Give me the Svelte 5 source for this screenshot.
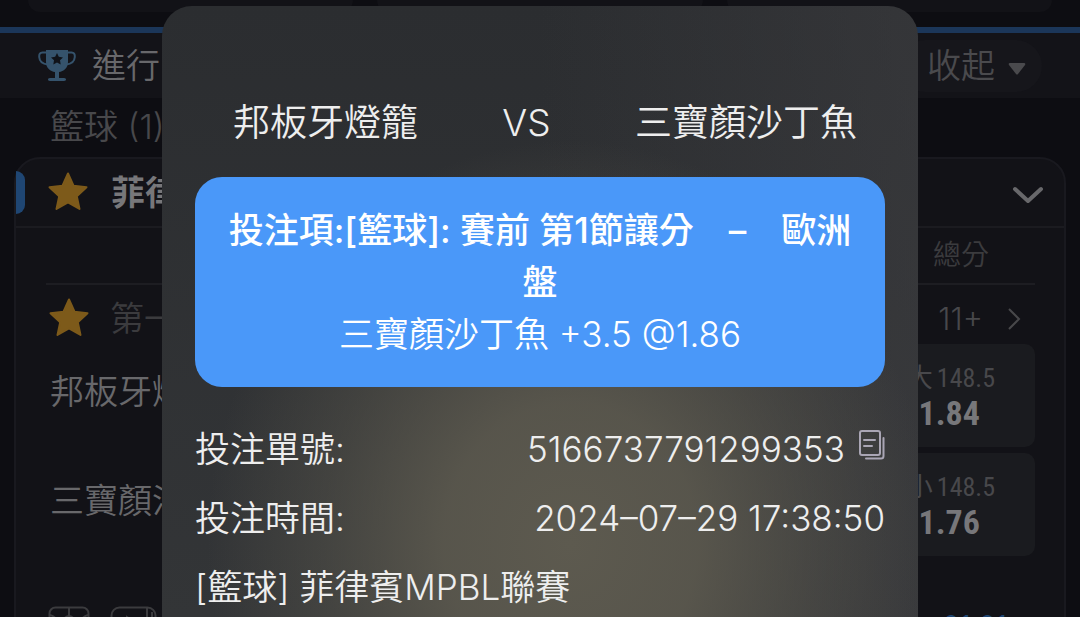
<script>
  const teams = ['邦板牙燈籠', '三寶顏沙丁魚'];
  const odds = [
    { team: teams[0], side: '大', line: '148.5', price: '1.84' },
    { team: teams[1], side: '小', line: '148.5', price: '1.76' },
  ];
  const orderNo = '5166737791299353';
  const orderTime = '2024–07–29 17:38:50';
  const copyOrder = () => navigator.clipboard?.writeText(orderNo);
</script>

{#snippet star()}
  <svg class="star" viewBox="0 0 42 40" aria-hidden="true">
    <path d="M21 2.5l5.5 12.2 13 1.5-9.7 9 2.7 12.8L21 31.500 9.500 38l2.700-12.800-9.700-9 13-1.500z" />
  </svg>
{/snippet}

<div class="screen">
  <main class="page" inert>
    <nav class="tabs"><span class="tab"></span><span class="tab"></span><span class="tab"></span></nav>

    <header class="live">
      <svg class="trophy" viewBox="0 0 38 34" aria-hidden="true">
        <path d="M9 3.500H4.500C2 3.500 1 5 1.200 8 1.500 12.500 4 15 10 15.500M29 3.500h4.500c2.500 0 3.500 1.500 3.300 4.500-.3 4.500-2.800 7-8.800 7.500" fill="none" stroke="#35536c" stroke-width="2" />
        <path d="M8 1h22v12c0 6-4.500 9.500-9 10v6H26c1.500 0 2 1 2 1.500s-.5 1.500-2 1.500H12c-1.500 0-2-1-2-1.500S10.500 29 12 29h5v-6C12.500 22.500 8 19 8 13z" fill="#35536c" />
        <path d="M19 4l1.800 3.800 4.200.6-3 2.900.7 4.200-3.700-2-3.700 2 .7-4.200-3-2.900 4.200-.6z" fill="#101319" />
      </svg>
      <h2>進行</h2>
      <button class="collapse" type="button">
        收起
        <svg viewBox="0 0 20 16" width="20" height="16" aria-hidden="true">
          <path d="M3 2h14q2 0 1 2l-7 9q-1 1-2 0L2 4Q1 2 3 2z" fill="#4a4a4d" />
        </svg>
      </button>
    </header>

    <h3>籃球 (1)</h3>

    <section class="card">
      <div class="league">
        <i class="accent"></i>
        {@render star()}
        <strong>菲律賓</strong>
        <svg class="chevron" viewBox="0 0 32 20" aria-hidden="true">
          <path d="M3 4l13 12L29 4" fill="none" stroke="#68686b" stroke-width="4" stroke-linecap="round" stroke-linejoin="round" />
        </svg>
      </div>
      <div class="body">
        <div class="columns">總分</div>
        <div class="period">
          {@render star()}
          <span>第一節</span>
          <a href="#more">11+
            <svg viewBox="0 0 14 24" width="14" height="24" aria-hidden="true">
              <path d="M2 2l10 10L2 22" fill="none" stroke="#48484b" stroke-width="2" />
            </svg>
          </a>
        </div>
        {#each odds as o}
          <div class="row">
            <span class="name">{o.team}</span>
            <button class="odd" type="button">
              <span class="line"><span class="side">{o.side}</span>{o.line}</span>
              <b>{o.price}</b>
            </button>
          </div>
        {/each}
        <footer>
          <svg viewBox="0 0 42 36" width="42" height="36" aria-hidden="true">
            <rect x="1.500" y="1.500" width="39" height="30" rx="6" />
            <path d="M21 2v28M2 9q8 2 8 12M40 9q-8 2-8 12" /><circle cx="21" cy="15" r="5" />
          </svg>
          <svg viewBox="0 0 48 36" width="48" height="36" aria-hidden="true">
            <rect x="1.500" y="1.500" width="44" height="32" rx="8" />
            <path d="M37 2v30M42 6v26M17 11l9 6-9 6z" />
          </svg>
          <time>01:01</time>
        </footer>
      </div>
    </section>
  </main>

  <div class="overlay">
    <section class="modal" role="dialog" aria-modal="true">
      <div class="match">
        <span>{teams[0]}</span>
        <span>VS</span>
        <span>{teams[1]}</span>
      </div>

      <div class="pick">
        <strong>投注項:[籃球]: 賽前 第1節讓分　–　歐洲盤</strong>
        <span>三寶顏沙丁魚 +3.5 @1.86</span>
      </div>

      <dl>
        <div>
          <dt>投注單號:</dt>
          <dd>
            {orderNo}
            <button class="copy" type="button" aria-label="複製" onclick={copyOrder}>
              <svg viewBox="0 0 27 32" width="27" height="32" aria-hidden="true">
                <rect x="2" y="2" width="20" height="24" rx="2" />
                <path d="M6 11h11M6 17h8M25.500 9v18q0 2.500-2.500 2.500H8" />
              </svg>
            </button>
          </dd>
        </div>
        <div>
          <dt>投注時間:</dt>
          <dd>{orderTime}</dd>
        </div>
      </dl>
      <p>[籃球] 菲律賓MPBL聯賽</p>
    </section>
  </div>
</div>

<style>
  :global(body) {
    margin: 0;
    background: #0d0d12;
  }
  .screen {
    position: relative;
    height: 100vh;
    overflow: hidden;
    background: #0d0d12;
    font-family: Inter, "Noto Sans CJK TC", sans-serif;
    font-weight: 350;
    font-size: 34px;
    line-height: 52px;
    color: #68686b;
    white-space: nowrap;
  }
  .screen * {
    box-sizing: border-box;
  }
  h2, h3, p, dl, dd {
    margin: 0;
    font-size: inherit;
    font-weight: inherit;
  }
  button {
    border: 0;
    padding: 0;
    background: none;
    color: inherit;
    font: inherit;
  }
  a {
    color: inherit;
    text-decoration: none;
  }
  .tabs {
    display: flex;
    gap: 24px;
    height: 33px;
    padding: 0 28px;
    border-bottom: 6px solid #1b3659;
  }
  .tab {
    flex: 1;
    height: 12px;
    border-radius: 0 0 16px 16px;
    background: #121217;
  }
  .live {
    display: flex;
    align-items: center;
    gap: 16px;
    height: 65px;
    padding: 0 38px;
    background: #131318;
  }
  .trophy {
    width: 38px;
    height: 34px;
  }
  .collapse {
    display: flex;
    align-items: center;
    gap: 12px;
    margin-left: auto;
    padding: 0 15px 0 28px;
    border-radius: 26px;
    background: #16161b;
    color: #4a4a4d;
  }
  .collapse svg {
    margin-top: 6px;
  }
  h3 {
    height: 59px;
    padding: 3px 50px;
    color: #48484b;
  }
  .card {
    margin: 0 14px;
    border: 2px solid #19191f;
    border-radius: 26px 26px 0 0;
    background: #121217;
  }
  .league {
    display: flex;
    align-items: center;
    height: 69px;
    padding-right: 20px;
    border-bottom: 2px solid #1b1b20;
    color: #77777a;
  }
  .league strong {
    font-weight: 700;
    margin-left: 22px;
  }
  .accent {
    width: 9px;
    height: 43px;
    margin-right: 22px;
    border-radius: 0 12px 12px 0;
    background: #1f4673;
  }
  .star {
    width: 42px;
    height: 40px;
    margin-bottom: 4px;
    fill: #7d5a1a;
    stroke: #7d5a1a;
    stroke-width: 2;
    stroke-linejoin: round;
  }
  .chevron {
    width: 32px;
    height: 20px;
    margin: 4px 0 0 auto;
  }
  .body {
    padding: 0 29px 0 30px;
  }
  .columns {
    height: 57px;
    padding: 1px 46px;
    border-bottom: 2px solid #1d1d22;
    text-align: right;
    font-size: 28px;
    color: #3b3b3e;
  }
  .period {
    display: flex;
    align-items: center;
    gap: 20px;
    height: 59px;
    padding: 8px 14px 0 2px;
    color: #3b3b3e;
  }
  .period a {
    display: flex;
    align-items: center;
    gap: 24px;
    margin-left: auto;
    color: #48484b;
    font-size: 31px;
  }
  .row {
    display: flex;
    justify-content: space-between;
    margin-bottom: 6px;
    padding-left: 4px;
  }
  .name {
    padding-top: 22px;
  }
  .odd {
    width: 220px;
    height: 103px;
    padding: 0 40px 0 0;
    border-radius: 10px;
    background: #1a1b1f;
    font-family: "Roboto Condensed", "Liberation Sans Narrow", "Noto Sans CJK TC", sans-serif;
    font-size: 26px;
    font-weight: 400;
    line-height: 35px;
    text-align: right;
    color: #48484b;
  }
  .line, .odd b {
    display: block;
  }
  .side {
    margin-right: 4px;
    font-size: 26px;
  }
  .odd b {
    padding-right: 15px;
    font-size: 34px;
    color: #77777a;
  }
  footer {
    display: flex;
    gap: 20px;
    padding: 44px 28px 0 2px;
  }
  footer svg {
    fill: none;
    stroke: #3b3b3e;
    stroke-width: 2;
  }
  footer time {
    margin-left: auto;
    padding-top: 2px;
    font-size: 28px;
    line-height: 36px;
    color: #1f4673;
  }
  .overlay {
    position: absolute;
    inset: 0;
    display: flex;
    padding: 6px 15% 0;
  }
  .modal {
    flex: 1;
    min-width: 0;
    padding: 91px 33px 0;
    border-radius: 30px 30px 0 0;
    background:
      radial-gradient(ellipse 48% 66% at 54% 88%, #5d5a4f 0%, #5d5a4fdd 35%, #5d5a4f66 68%, #5d5a4f00 100%),
      linear-gradient(90deg, #2b2e3100 50%, #3d3d4088 100%),
      linear-gradient(180deg, #2b2d30, #333537);
    color: #eeeeee;
    font-size: 35px;
  }
  .match {
    display: flex;
    justify-content: space-between;
    padding: 0 28px 28px 38px;
    font-size: 37px;
  }
  .pick {
    padding: 27px 30px;
    border-radius: 27px;
    background: #4a98f9;
    color: #ffffff;
    text-align: center;
    white-space: normal;
  }
  .pick > * {
    display: block;
  }
  .pick strong {
    font-weight: 500;
  }
  dl {
    padding-top: 36px;
  }
  dl > div {
    display: flex;
    justify-content: space-between;
    margin-bottom: 17px;
  }
  dd {
    display: flex;
    align-items: center;
    gap: 13px;
  }
  .copy {
    display: flex;
    height: 40px;
  }
  .copy svg {
    fill: none;
    stroke: #aaa6b5;
    stroke-width: 2;
    stroke-linecap: round;
  }
</style>
